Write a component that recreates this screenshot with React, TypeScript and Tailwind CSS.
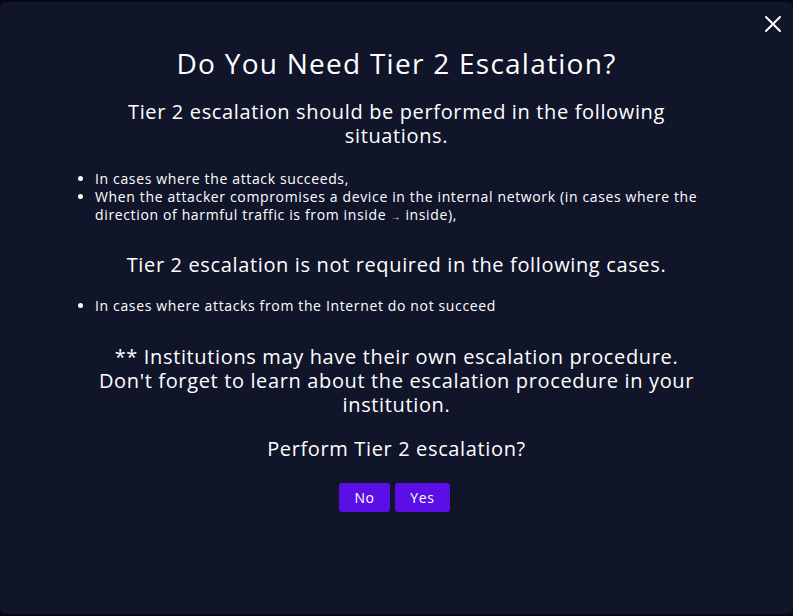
import { X } from "lucide-react";

const font = { fontFamily: '"Open Sans", "Noto Sans", sans-serif' };

export default function App() {
  return (
    <div className="min-h-screen bg-[#060913] py-[2px]" style={font}>
      <div className="relative h-[612px] rounded-md bg-[#10152a] px-20 pt-[44px] text-center tracking-[0.04em] text-white">
        <button className="absolute right-[6px] top-[8px] text-white">
          <X size={28} strokeWidth={1.7} />
        </button>

        <h1 className="text-[28px] leading-[34px] font-normal tracking-[0.045em]">Do You Need Tier 2 Escalation?</h1>

        <p className="mt-5 text-[20px] leading-6">
          Tier 2 escalation should be performed in the following situations.
        </p>

        <ul className="mt-[22px] list-disc pl-[15px] text-left text-sm leading-[18px]">
          <li>In cases where the attack succeeds,</li>
          <li>
            When the attacker compromises a device in the internal network (in cases where the direction of harmful
            traffic is from inside <span className="text-[10px]">→</span> inside),
          </li>
        </ul>

        <p className="mt-[28px] text-[20px] leading-6">Tier 2 escalation is not required in the following cases.</p>

        <ul className="mt-5 list-disc pl-[15px] text-left text-sm leading-[18px]">
          <li>In cases where attacks from the Internet do not succeed</li>
        </ul>

        <p className="mx-[10px] mt-[30px] text-[20px] leading-6">
          ** Institutions may have their own escalation procedure. Don't forget to learn about the escalation
          procedure in your institution.
        </p>

        <p className="mt-5 text-[20px] leading-6">Perform Tier 2 escalation?</p>

        <div className="mr-1 mt-[22px] flex justify-center gap-[5px]">
          <button className="h-[29px] w-[51px] rounded-[3px] bg-[#5b0fe6] text-sm text-white">No</button>
          <button className="h-[29px] w-[55px] rounded-[3px] bg-[#5b0fe6] text-sm text-white">Yes</button>
        </div>
      </div>
    </div>
  );
}
